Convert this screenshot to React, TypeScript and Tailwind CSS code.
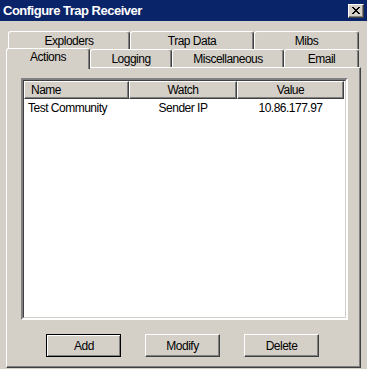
import React from 'react';

const font = "font-['Liberation_Sans',Arial,sans-serif]";

// classic 8x7 close glyph, one row per entry
const closeRows = ['11000011', '01100110', '00111100', '00011000', '00111100', '01100110', '11000011'];

const CloseGlyph: React.FC = () => (
  <svg width="8" height="7" viewBox="0 0 8 7" shapeRendering="crispEdges">
    {closeRows.map((row, y) =>
      row.split('').map((c, x) => (c === '1' ? <rect key={`${x}-${y}`} x={x} y={y} width="1" height="1" fill="#000" /> : null))
    )}
  </svg>
);

const Tab: React.FC<{ label: string; className: string; selected?: boolean }> = ({ label, className, selected }) => (
  <div
    className={`${className} flex justify-center bg-[#d4d0c8] border-l border-t border-r border-white border-r-[#404040] rounded-t-[3px] shadow-[inset_-1px_0_0_#808080] ${
      selected ? 'h-[21px] -mb-[2px] pt-[1px] relative z-10' : 'h-[18px] pt-[2px]'
    }`}
  >
    <span className="text-[12px] leading-[14px] tracking-[-0.5px] text-black">{label}</span>
  </div>
);

const HeaderCell: React.FC<{ label: string; className: string; left?: boolean }> = ({ label, className, left }) => (
  <div
    className={`${className} h-[18px] flex items-center bg-[#d4d0c8] border-l border-t border-white border-r border-b border-r-[#404040] border-b-[#404040] shadow-[inset_-1px_-1px_0_#808080] ${
      left ? 'pl-[6px]' : 'justify-center'
    }`}
  >
    <span className="text-[12px] leading-[14px] tracking-[-0.5px]">{label}</span>
  </div>
);

const Button: React.FC<{ label: string; isDefault?: boolean }> = ({ label, isDefault }) =>
  isDefault ? (
    <button className="w-[75px] h-[23px] border border-black bg-[#d4d0c8] p-0">
      <div className="w-full h-full flex items-center justify-center border-l border-t border-white shadow-[inset_-1px_-1px_0_#808080] text-[12px] tracking-[-0.5px]">
        {label}
      </div>
    </button>
  ) : (
    <button className="w-[75px] h-[23px] flex items-center justify-center bg-[#d4d0c8] border-l border-t border-white border-r border-b border-r-[#404040] border-b-[#404040] shadow-[inset_-1px_-1px_0_#808080] text-[12px] tracking-[-0.5px]">
      {label}
    </button>
  );

const App: React.FC = () => {
  return (
    <div className={`${font} w-[367px] h-[369px] bg-[#d4d0c8] flex flex-col overflow-hidden text-black`}>
      {/* Title bar */}
      <div className="h-[21px] bg-[#0a246a] flex items-center justify-between pl-[3px] pr-[3px]">
        <span className="text-white font-bold text-[13px] tracking-[-0.5px]">Configure Trap Receiver</span>
        <div className="w-[16px] h-[14px] bg-[#d4d0c8] flex items-center justify-center border-l border-t border-white border-r border-b border-r-[#404040] border-b-[#404040] shadow-[inset_-1px_-1px_0_#808080]">
          <CloseGlyph />
        </div>
      </div>

      <div className="pl-[6px] pt-[10px]">
        {/* Back row of tabs */}
        <div className="flex pl-[2px]">
          <Tab label="Exploders" className="w-[122px]" />
          <Tab label="Trap Data" className="w-[124px]" />
          <Tab label="Mibs" className="w-[105px]" />
        </div>
        {/* Front row of tabs */}
        <div className="flex items-end h-[18px]">
          <Tab label="Actions" className="w-[84px]" selected />
          <Tab label="Logging" className="w-[82px]" />
          <Tab label="Miscellaneous" className="w-[112px]" />
          <Tab label="Email" className="w-[75px]" />
        </div>

        {/* Panel */}
        <div className="w-[355px] h-[301px] border-l border-t border-white border-r border-b border-r-[#404040] border-b-[#404040] shadow-[inset_-1px_-1px_0_#808080] flex flex-col">
          <div className="ml-[14px] mt-[10px] w-[327px] h-[242px] border-2 border-t-[#808080] border-l-[#808080] border-r-white border-b-white">
            <div className="w-full h-full border border-t-[#404040] border-l-[#404040] border-r-[#d4d0c8] border-b-[#d4d0c8] bg-white flex flex-col">
              <div className="flex">
                <HeaderCell label="Name" className="w-[105px]" left />
                <HeaderCell label="Watch" className="w-[108px]" />
                <HeaderCell label="Value" className="w-[107px]" />
                <div className="flex-1 h-[18px] bg-[#d4d0c8] border-l border-t border-white" />
              </div>
              <div className="flex h-[16px] items-center text-[12px] tracking-[-0.5px] pt-[1px]">
                <span className="w-[105px] pl-[4px]">Test Community</span>
                <span className="w-[108px] text-center">Sender IP</span>
                <span className="w-[107px] text-center">10.86.177.97</span>
              </div>
            </div>
          </div>

          <div className="mt-[14px] flex justify-center gap-[24px] pr-[2px]">
            <Button label="Add" isDefault />
            <Button label="Modify" />
            <Button label="Delete" />
          </div>
        </div>
      </div>
    </div>
  );
};

export default App;
